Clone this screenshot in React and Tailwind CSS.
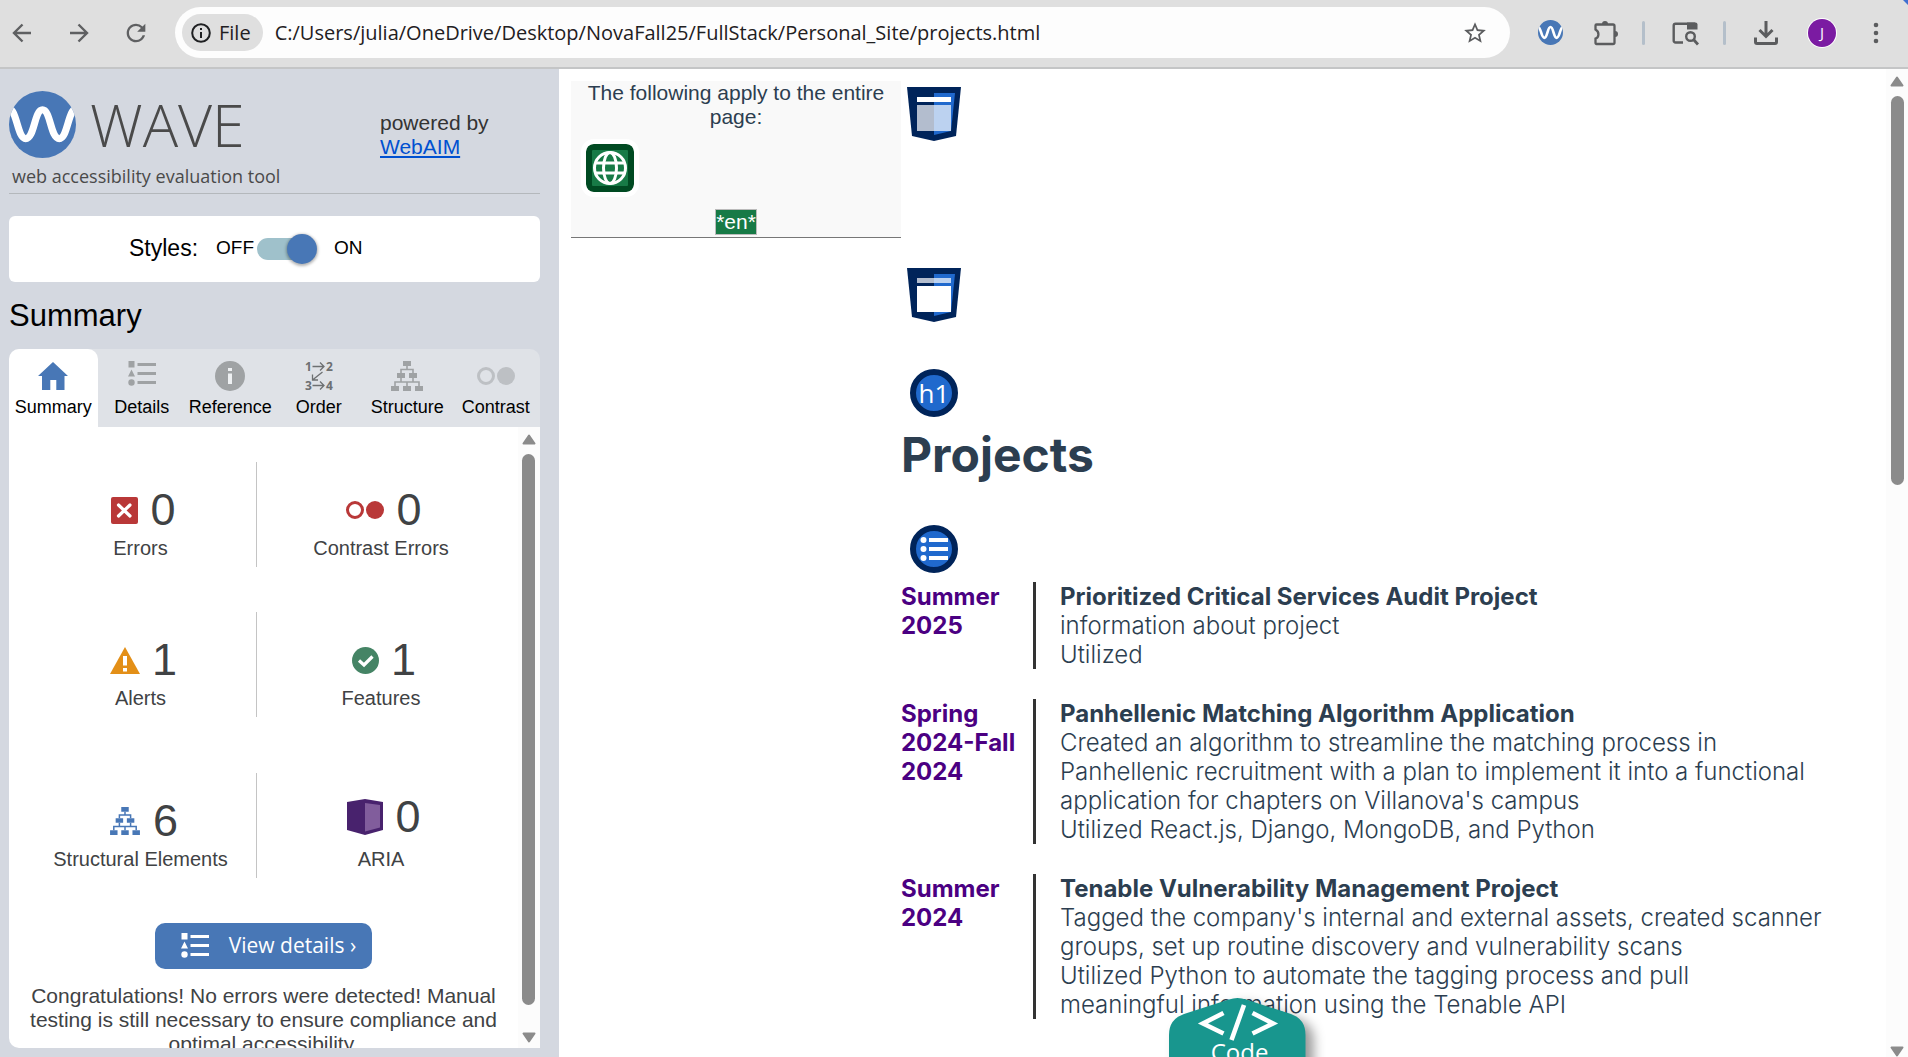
import { useId } from "react";
import { MdRefresh, MdStarBorder } from "react-icons/md";

const LIB = "font-['Liberation_Sans',sans-serif]";
const OPEN = "font-['Open_Sans',sans-serif]";
const INTER = "font-['Inter',sans-serif]";

/* ---------- icons ---------- */

function ArrowIcon({ flip }) {
  return (
    <svg viewBox="0 0 24 24" className={flip ? "size-6 rotate-180" : "size-6"} fill="none" stroke="#5f6062" strokeWidth="2.4">
      <path d="M21 12H4.5M12.5 3.5L4 12l8.5 8.5" />
    </svg>
  );
}

function WaveLogo({ className }) {
  const id = useId();
  return (
    <svg viewBox="0 0 66 66" className={className} aria-hidden="true">
      <clipPath id={id}>
        <circle cx="33" cy="33" r="33" />
      </clipPath>
      <g clipPath={`url(#${id})`}>
        <rect width="66" height="66" fill="#4877b6" />
        <path d="M-1 17C8 17 8 47 16.500 47S25 18.500 33 18.500S41 47 49.500 47S58 17 67 17" fill="none" stroke="#fff" strokeWidth="7" />
      </g>
    </svg>
  );
}

function ExtensionIcon() {
  return (
    <svg viewBox="0 0 26 26" className="size-[26px]" aria-hidden="true">
      <path d="M3.500 4.500H20a1.500 1.500 0 0 1 1.500 1.500V22.500a1.500 1.500 0 0 1-1.500 1.500H3.500a1 1 0 0 1-1-1V18.500C6 17.500 6.800 12 2.500 9.500V5.500a1 1 0 0 1 1-1Z" fill="none" stroke="#5b5c5e" strokeWidth="2.300" />
      <path d="M9 4a3 3 0 0 1 6 0ZM22 11a3 3 0 0 1 0 6Z" fill="#5b5c5e" />
    </svg>
  );
}

function TabSearchIcon() {
  return (
    <svg viewBox="0 0 28 26" className="h-[26px] w-7" aria-hidden="true" fill="none" stroke="#5b5c5e" strokeWidth="2.400">
      <path d="M12 22.500H4.500A1.800 1.800 0 0 1 2.700 20.700V5.500A1.800 1.800 0 0 1 4.500 3.700H24" />
      <path d="M16 2.500H24.500A2 2 0 0 1 26.500 4.500V9.500H16Z" fill="#5b5c5e" stroke="none" />
      <circle cx="19.500" cy="16.500" r="4.300" />
      <path d="M22.500 19.500L27 24.500" strokeWidth="2.800" />
    </svg>
  );
}

function DownloadIcon() {
  return (
    <svg viewBox="0 0 26 26" className="size-[26px]" aria-hidden="true" fill="none" stroke="#5b5c5e" strokeWidth="3">
      <path d="M13 1V16M6.500 10L13 16.500L19.500 10" />
      <path d="M2.500 17.500V22A1.500 1.500 0 0 0 4 23.500H22A1.500 1.500 0 0 0 23.500 22V17.500" />
    </svg>
  );
}

function HomeIcon() {
  return (
    <svg viewBox="0 0 30 28" className="h-7 w-[30px]" fill="#4877b6">
      <path d="M15 0L30 14H26.500V28H18.300V18H12.300V28H4V14H0Z" />
    </svg>
  );
}

function DetailsIcon({ className }) {
  return (
    <svg viewBox="0 0 28 26" className={className} fill="currentColor">
      <path d="M0.500 0H6.500V6.500H0.500ZM3.500 8.500L7 15.500H0Z" />
      <circle cx="3.500" cy="21.500" r="3.200" />
      <path d="M9.500 2H28V5H9.500ZM9.500 11H28V14H9.500ZM9.500 20H28V23H9.500Z" />
    </svg>
  );
}

function InfoIcon() {
  return (
    <svg viewBox="0 0 30 30" className="size-[30px]">
      <circle cx="15" cy="15" r="15" fill="#9fa2a4" />
      <path d="M13 7H17V10H13ZM13 12.500H17V23H13Z" fill="#eef0f2" />
    </svg>
  );
}

function OrderIcon() {
  return (
    <svg viewBox="0 0 30 30" className="size-[30px]">
      <g fill="#6d7072" fontFamily="Open Sans, sans-serif" fontWeight="700" fontSize="12">
        <text x="1" y="10">1</text>
        <text x="22" y="10">2</text>
        <text x="1" y="29">3</text>
        <text x="22" y="29">4</text>
      </g>
      <path d="M8.500 5.500H20M16 1.500L20 5.500L16 9.500M8.500 24.500H20M16 20.500L20 24.500L16 28.500M18.500 11L8.500 19M8.500 13.500V19H14" fill="none" stroke="#6d7072" strokeWidth="1.300" />
    </svg>
  );
}

function StructureIcon({ className }) {
  return (
    <svg viewBox="0 0 32 30" className={className} fill="currentColor">
      <path d="M12 0H20V5H12ZM6 12H14V17H6ZM18 12H26V17H18ZM0 25H8V30H0ZM12 25H20V30H12ZM24 25H32V30H24Z" />
      <path d="M16 5V8.500M10 12V8.500H22V12M10 17V21M22 17V21M4 25V21H28V25M16 21V25" fill="none" stroke="currentColor" strokeWidth="1.600" />
    </svg>
  );
}

function ContrastIcon({ className }) {
  return (
    <svg viewBox="0 0 38 20" className={className}>
      <circle cx="9" cy="10" r="7.500" fill="none" stroke="currentColor" strokeWidth="3" />
      <circle cx="29" cy="10" r="9" fill="currentColor" />
    </svg>
  );
}

function ErrorIcon() {
  return (
    <svg viewBox="0 0 27 27" className="size-[27px]">
      <rect width="27" height="27" rx="2" fill="#b93838" />
      <path d="M7.500 8L19 19M19 8L7.500 19" stroke="#fff" strokeWidth="3.200" strokeLinecap="round" />
    </svg>
  );
}

function AlertIcon() {
  return (
    <svg viewBox="0 0 30 27" className="h-[27px] w-[30px]">
      <path d="M15 0L30 27H0Z" fill="#e38f17" />
      <path d="M13 9H17V18.500H13ZM13 21H17V24.500H13Z" fill="#fff" />
    </svg>
  );
}

function FeatureIcon() {
  return (
    <svg viewBox="0 0 27 27" className="size-[27px]">
      <circle cx="13.500" cy="13.500" r="13.500" fill="#458465" />
      <path d="M7 13.500L12 18L20.500 9.500" fill="none" stroke="#fff" strokeWidth="3.200" />
    </svg>
  );
}

function AriaIcon() {
  return (
    <svg viewBox="0 0 36 36" className="size-9">
      <path d="M0 3L18 0L36 3V31L18 36L0 31Z" fill="#48226d" />
      <path d="M18 4L33 6V28.500L18 32.500Z" fill="#815d9c" />
    </svg>
  );
}

function ShieldIcon({ head, body }) {
  return (
    <svg viewBox="0 0 54 54" className="size-[54px]" aria-hidden="true">
      <path d="M0 0H54L49 49L27 54L5 49Z" fill="#00245a" />
      <path d="M27 6H48L44 44L27 48Z" fill="#2069cd" />
      <path d="M10 10H44V15H10Z" fill="#fff" opacity={head} />
      <path d="M10 18H44V44H10Z" fill="#fff" opacity={body} />
    </svg>
  );
}

function GlobeIcon() {
  return (
    <svg viewBox="0 0 48 48" className="size-12 rounded-lg shadow-[0_0_0_5px_#fff]" aria-hidden="true">
      <rect width="48" height="48" rx="7" fill="#004a22" />
      <rect x="6" y="6" width="36" height="36" rx="1" fill="#177a46" />
      <g fill="none" stroke="#fff" strokeWidth="3">
        <circle cx="24" cy="24" r="15.500" />
        <ellipse cx="24" cy="24" rx="6.500" ry="15.500" />
        <path d="M9 19H39M9 29H39" />
      </g>
    </svg>
  );
}

/* ---------- shared pieces ---------- */

function ScrollArrow({ down }) {
  return (
    <svg viewBox="0 0 14 11" className={down ? "h-[11px] w-3.5 shrink-0 rotate-180" : "h-[11px] w-3.5 shrink-0"} aria-hidden="true">
      <path d="M7 1.500L12.500 9.500H1.500Z" fill="#8b8b8b" stroke="#8b8b8b" strokeWidth="2" strokeLinejoin="round" />
    </svg>
  );
}

function ToolButton({ label, className = "", children }) {
  return (
    <button type="button" aria-label={label} className={`flex size-10 shrink-0 items-center justify-center rounded-full ${className}`}>
      {children}
    </button>
  );
}

/* ---------- browser bar ---------- */

function BrowserBar() {
  return (
    <header className={`relative flex h-[69px] shrink-0 items-center border-b-2 border-[#c4c5c6] bg-[#dfdfdf] pb-0.5 pl-0.5 pr-3 ${OPEN}`}>
      <nav className="flex gap-[17px]" aria-label="History">
        <ToolButton label="Back"><ArrowIcon /></ToolButton>
        <ToolButton label="Forward"><ArrowIcon flip /></ToolButton>
        <ToolButton label="Reload"><MdRefresh className="size-7 text-[#5f6062]" /></ToolButton>
      </nav>
      <div className="ml-[19px] flex h-[51px] min-w-0 flex-1 items-center rounded-full bg-[#fdfdfd] pl-[7px] pr-4">
        <button type="button" className="flex h-[37px] items-center gap-2 rounded-full bg-[#dfdfdf] pl-[9px] pr-3 text-[20px] text-[#1f2022]">
          <svg viewBox="0 0 20 20" className="size-5" fill="none" stroke="#1f2022" strokeWidth="2" aria-hidden="true">
            <circle cx="10" cy="10" r="8.800" />
            <path d="M10 9V15M10 5V7" />
          </svg>
          File
        </button>
        <input
          aria-label="Address"
          readOnly
          value="C:/Users/julia/OneDrive/Desktop/NovaFall25/FullStack/Personal_Site/projects.html"
          className="ml-3 min-w-0 flex-1 bg-transparent text-[20px] text-[#1f2022] outline-none"
        />
        <button type="button" aria-label="Bookmark this page">
          <MdStarBorder className="mr-1.5 size-[26px] text-[#5b5c5e]" />
        </button>
      </div>
      <ToolButton label="WAVE extension" className="ml-5"><WaveLogo className="size-[25px]" /></ToolButton>
      <ToolButton label="Extensions" className="ml-4"><ExtensionIcon /></ToolButton>
      <span className="ml-4 h-6 w-[3px] shrink-0 rounded bg-[#b4bfca]" />
      <ToolButton label="Search tabs" className="ml-5"><TabSearchIcon /></ToolButton>
      <span className="ml-[18px] h-6 w-[3px] shrink-0 rounded bg-[#b4bfca]" />
      <ToolButton label="Downloads" className="ml-5"><DownloadIcon /></ToolButton>
      <ToolButton label="Profile" className="ml-4">
        <span className="flex size-7 items-center justify-center rounded-full bg-[#7b1ba2] text-[15px] text-white shadow-[0_0_0_1px_#fff]">J</span>
      </ToolButton>
      <ToolButton label="Menu" className="ml-3.5">
        <svg viewBox="0 0 6 22" className="h-[22px] w-1.5" fill="#5b5c5e">
          <circle cx="3" cy="3" r="2.300" />
          <circle cx="3" cy="11" r="2.300" />
          <circle cx="3" cy="19" r="2.300" />
        </svg>
      </ToolButton>
      <svg viewBox="0 0 5 5" className="absolute right-0 top-0 size-[5px]" aria-hidden="true">
        <path d="M0 0H5V5Z" fill="#3f6fd0" />
      </svg>
    </header>
  );
}

/* ---------- sidebar ---------- */

const TABS = [
  { label: "Summary", icon: <HomeIcon />, active: true },
  { label: "Details", icon: <DetailsIcon className="mb-1 h-[26px] w-7 text-[#9fa2a4]" /> },
  { label: "Reference", icon: <InfoIcon /> },
  { label: "Order", icon: <OrderIcon /> },
  { label: "Structure", icon: <StructureIcon className="h-[30px] w-8 text-[#9fa2a4]" /> },
  { label: "Contrast", icon: <ContrastIcon className="h-5 w-[38px] text-[#bdc0c4]" /> },
];

function Stat({ icon, count, label, divided, raised }) {
  return (
    <div className={`flex flex-col items-center pt-6 ${divided ? "border-r border-[#c4c4c4] pl-4" : ""}`}>
      <div className={`flex h-12 items-center gap-3 pl-1.5 text-[45px] leading-[48px] ${raised ? "pb-2" : ""}`}>
        {icon}
        <span>{count}</span>
      </div>
      <div className="mt-0.5 text-[20px] leading-6">{label}</div>
    </div>
  );
}

function StatRow({ className = "", children }) {
  return <div className={`grid h-[105px] grid-cols-2 pr-[13px] ${className}`}>{children}</div>;
}

function Sidebar() {
  return (
    <aside className={`flex w-[559px] shrink-0 flex-col bg-[#d4d8e0] pb-[9px] pl-[9px] pr-[19px] pt-[22px] ${LIB}`}>
      <div className="flex border-b border-[#b4b8bc] pb-[5px]">
        <div className={`w-[371px] text-[#4a4a4a] ${OPEN}`}>
          <div className="flex items-center gap-3.5">
            <WaveLogo className="size-[67px]" />
            <span className="text-[59px] font-light leading-[67px]">WAVE</span>
          </div>
          <div className="mt-1.5 pl-[3px] text-[18px] leading-6">web accessibility evaluation tool</div>
        </div>
        <div className="mt-5 text-[21px] leading-6 text-[#333]">
          powered by<br />
          <a href="#webaim" className="text-[#0050d0] underline decoration-2 underline-offset-2">WebAIM</a>
        </div>
      </div>

      <div className="mt-[22px] flex h-[66px] shrink-0 items-center rounded-md bg-white pb-0.5 pl-[120px] text-[19px] text-black">
        <span className="mr-[18px] text-[23px]">Styles:</span>
        <span>OFF</span>
        <label className="relative ml-[3px] mt-0.5 flex h-[22px] w-[60px] items-center">
          <input type="checkbox" defaultChecked aria-label="Styles" className="h-[22px] w-12 appearance-none rounded-full bg-[#9fc1cb]" />
          <span className="absolute right-0 size-[30px] rounded-full bg-[#4877b6] shadow-[0_1px_3px_1px_rgba(0,0,0,0.3)]" />
        </label>
        <span className="ml-[17px]">ON</span>
      </div>

      <h2 className="mt-4 text-[31px] leading-9 text-black">Summary</h2>

      <div role="tablist" className="mt-[15px] grid shrink-0 grid-cols-6 rounded-t-[10px] bg-[#dfe2e7] text-[18px] leading-6 text-black">
        {TABS.map((t) => (
          <button
            key={t.label}
            type="button"
            role="tab"
            aria-selected={!!t.active}
            className={`flex h-[78px] flex-col items-center ${t.active ? "rounded-t-[10px] bg-white" : ""}`}
          >
            <span className="mt-2.5 flex h-[34px] items-center">{t.icon}</span>
            <span className="mt-0.5">{t.label}</span>
          </button>
        ))}
      </div>

      <div className="flex min-h-0 flex-1 overflow-hidden rounded-bl-[10px] bg-white text-[#404244]">
        <div className="min-w-0 flex-1 overflow-hidden">
          <StatRow className="mt-[35px]">
            <Stat divided icon={<ErrorIcon />} count={0} label="Errors" />
            <Stat icon={<ContrastIcon className="h-5 w-[38px] text-[#b93838]" />} count={0} label="Contrast Errors" />
          </StatRow>
          <StatRow className="mt-[45px]">
            <Stat divided icon={<AlertIcon />} count={1} label="Alerts" />
            <Stat icon={<FeatureIcon />} count={1} label="Features" />
          </StatRow>
          <StatRow className="mt-14">
            <Stat divided icon={<StructureIcon className="h-7 w-8 text-[#4877b6]" />} count={6} label="Structural Elements" />
            <Stat raised icon={<AriaIcon />} count={0} label="ARIA" />
          </StatRow>
          <button type="button" className={`mx-auto mt-[45px] flex h-[46px] items-center gap-5 rounded-[10px] bg-[#4877b6] pl-[26px] pr-4 text-[21px] text-white ${OPEN}`}>
            <DetailsIcon className="h-[26px] w-7" />
            View details ›
          </button>
          <p className="mx-4 mt-[15px] text-center text-[21px] leading-6">
            Congratulations! No errors were detected! Manual testing is still necessary to ensure compliance and optimal accessibility.
          </p>
        </div>
        <div className="flex w-[22px] shrink-0 flex-col items-center bg-[#fcfcfc] pb-[5px] pr-px pt-[7px]">
          <ScrollArrow />
          <span className="mb-[27px] mt-[9px] w-[13px] flex-1 rounded-full bg-[#8b8b8b]" />
          <ScrollArrow down />
        </div>
      </div>
    </aside>
  );
}

/* ---------- page ---------- */

const PROJECTS = [
  {
    date: "Summer 2025",
    title: "Prioritized Critical Services Audit Project",
    text: ["information about project", "Utilized"],
  },
  {
    date: "Spring 2024-Fall 2024",
    title: "Panhellenic Matching Algorithm Application",
    text: [
      "Created an algorithm to streamline the matching process in Panhellenic recruitment with a plan to implement it into a functional application for chapters on Villanova's campus",
      "Utilized React.js, Django, MongoDB, and Python",
    ],
  },
  {
    date: "Summer 2024",
    title: "Tenable Vulnerability Management Project",
    text: [
      "Tagged the company's internal and external assets, created scanner groups, set up routine discovery and vulnerability scans",
      "Utilized Python to automate the tagging process and pull\nmeaningful information using the Tenable API",
    ],
  },
];

function CodeBadge() {
  return (
    <button type="button" className={`absolute -bottom-[68px] left-[610px] h-[127px] w-[137px] text-white ${OPEN}`}>
      <svg viewBox="0 0 137 127" className="absolute inset-0 h-full w-full overflow-visible drop-shadow-[8px_6px_6px_rgba(0,0,0,0.4)]" aria-hidden="true">
        <path d="M60 1.500Q68.500 -1.500 77 1.500L122 16Q136.500 21 136.500 37V127H0V37Q0 21 15 16Z" fill="#18968e" />
        <path d="M54.500 15L34 25.500L54.500 35.500M83.500 15L104 25.500L83.500 35.500M75 7L62.500 42" fill="none" stroke="#fff" strokeWidth="4.600" />
      </svg>
      <span className="absolute inset-x-0 top-10 pl-1 text-center text-[24px] leading-7">Code</span>
    </button>
  );
}

function Page() {
  return (
    <main className="relative flex min-w-0 flex-1 overflow-hidden bg-white pl-3">
      <section className={`mt-3 h-[157px] w-[330px] shrink-0 border-b border-[#777] bg-[#f9f9f9] text-[21px] leading-6 text-[#2c3e50] ${LIB}`}>
        <p className="px-2 text-center">The following apply to the entire page:</p>
        <div className="ml-[15px] mt-[15px]"><GlobeIcon /></div>
        <div className="mt-[17px] flex justify-center">
          <span className="border border-[#bbb] bg-[#177a46] leading-6 text-white">*en*</span>
        </div>
      </section>

      <div className={`flex min-w-0 flex-1 flex-col items-start pr-14 pt-[18px] text-[24px] leading-[29px] text-[#2c3e50] ${INTER}`}>
        <div className="ml-1.5"><ShieldIcon head="1" body="0.7" /></div>
        <div className="ml-1.5 mt-[127px]"><ShieldIcon head="0.7" body="1" /></div>
        <div className="ml-[9px] mt-[47px] flex size-12 shrink-0 items-center justify-center rounded-full border-[6px] border-[#00245a] bg-[#2069cd] text-[26px] text-white">
          <span className="font-['Open_Sans',sans-serif]">h1</span>
        </div>
        <h1 className="mt-[9px] text-[48px] font-bold leading-[58px]">Projects</h1>
        <div className="ml-[9px] mt-[41px] flex size-12 shrink-0 items-center justify-center rounded-full border-[6px] border-[#00245a] bg-[#2069cd]">
          <svg viewBox="0 0 28 26" className="h-[26px] w-7" fill="#fff" aria-hidden="true">
            <circle cx="3.500" cy="4" r="3" />
            <circle cx="3.500" cy="13" r="3" />
            <circle cx="3.500" cy="22" r="3" />
            <path d="M9 2H28V6H9ZM9 11H28V15H9ZM9 20H28V24H9Z" />
          </svg>
        </div>
        <ul className="mt-[9px] flex flex-col gap-[30px]">
          {PROJECTS.map((p) => (
            <li key={p.title} className="flex">
              <div className="w-[132px] shrink-0 pr-4 font-bold text-[#4b0082]">{p.date}</div>
              <div className="whitespace-pre-line border-l-[3px] border-[#333] pl-6 font-light">
                <h2 className="font-bold">{p.title}</h2>
                {p.text.map((line) => (
                  <p key={line}>{line}</p>
                ))}
              </div>
            </li>
          ))}
        </ul>
      </div>

      <CodeBadge />
    </main>
  );
}

export default function App() {
  return (
    <div className="flex h-screen flex-col overflow-hidden">
      <BrowserBar />
      <div className="flex min-h-0 flex-1">
        <Sidebar />
        <Page />
        <div className="flex w-[22px] shrink-0 flex-col items-center overflow-hidden bg-[#fcfcfc] pt-[7px]">
          <ScrollArrow />
          <span className="mb-auto mt-[9px] h-[389px] w-[13px] shrink-0 rounded-full bg-[#8b8b8b]" />
          <ScrollArrow down />
        </div>
      </div>
    </div>
  );
}
